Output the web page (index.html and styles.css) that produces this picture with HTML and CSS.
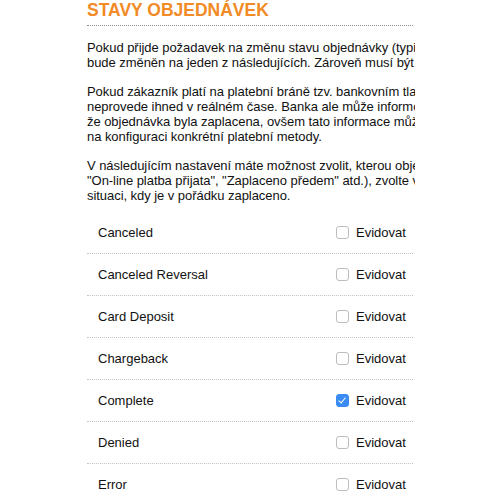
FILE: index.html
```
<!DOCTYPE html>
<html lang="cs">
	<head>
		<meta charset="utf-8" />
		<link rel="stylesheet" href="styles.css">
		<title>Stavy objednávek</title>
	</head>
	<body>
		<div id="wrapper">
			<div class="hd">
				<h1>STAVY OBJEDNÁVEK</h1>
			</div>
			<div class="intro">
				<p>Pokud přijde požadavek na změnu stavu objednávky (typicky z platební brány),<br />bude změněn na jeden z následujících. Zároveň musí být objednávka evidována.</p>
				<p>Pokud zákazník platí na platební bráně tzv. bankovním tlačítkem, platba se často<br />neprovede ihned v reálném čase. Banka ale může informovat obchod o tom,<br />že objednávka byla zaplacena, ovšem tato informace může přijít později. Záleží<br />na konfiguraci konkrétní platební metody.</p>
				<p>V následujícím nastavení máte možnost zvolit, kterou objednávku budete evidovat (např.<br />"On-line platba přijata", "Zaplaceno předem" atd.), zvolte vždy takovou, která odpovídá<br />situaci, kdy je v pořádku zaplaceno.</p>
			</div>
			<ul class="states">
				<li><span class="name">Canceled</span><label><input type="checkbox" /> Evidovat</label></li>
				<li><span class="name">Canceled Reversal</span><label><input type="checkbox" /> Evidovat</label></li>
				<li><span class="name">Card Deposit</span><label><input type="checkbox" /> Evidovat</label></li>
				<li><span class="name">Chargeback</span><label><input type="checkbox" /> Evidovat</label></li>
				<li><span class="name">Complete</span><label><input type="checkbox" checked="checked" /> Evidovat</label></li>
				<li><span class="name">Denied</span><label><input type="checkbox" /> Evidovat</label></li>
				<li><span class="name">Error</span><label><input type="checkbox" /> Evidovat</label></li>
			</ul>
		</div>
	</body>
</html>
```
FILE: styles.css
```
body,html{
	background-color:#fff;
	font-family:"Liberation Sans", Arial, Helvetica, sans-serif;
	color:#111;
}
body,html,div,h1,p,ul,li{
	padding:0;
	margin:0;
}
#wrapper{
	width:328px;
	margin-left:87px;
	overflow:hidden;
}
.hd h1{
	font-size:17.5px;
	line-height:20px;
	color:#f28a26;
	padding-bottom:5px;
	width:326px;
	border-bottom:1px dotted #8a8a8a;
}
.intro{
	padding-top:14px;
}
.intro p{
	font-size:13px;
	line-height:15px;
	letter-spacing:-0.05px;
	white-space:nowrap;
	margin-bottom:14px;
}
.states{
	list-style:none;
	width:326px;
	margin-top:-5px;
}
.states li{
	display:flex;
	align-items:center;
	height:41px;
	font-size:13px;
	border-bottom:1px dotted #c4c4c4;
}
.states li:last-child{
	border-bottom:none;
}
.states .name{
	flex:1;
	padding-left:11px;
}
.states label{
	width:77px;
	display:flex;
	align-items:center;
	gap:3px;
}
.states input{
	-webkit-appearance:none;
	appearance:none;
	position:relative;
	width:13px;
	height:13px;
	margin:0 4px 0 0;
	border:1px solid #bdbdbd;
	border-radius:3px;
	background:#fff;
}
.states input:checked{
	background:#3a8cf4;
	border-color:#3a8cf4;
}
.states input:checked::after{
	content:"";
	position:absolute;
	left:3px;
	top:1px;
	width:3px;
	height:6px;
	border:solid #fff;
	border-width:0 1.5px 1.5px 0;
	transform:rotate(40deg);
}
```
